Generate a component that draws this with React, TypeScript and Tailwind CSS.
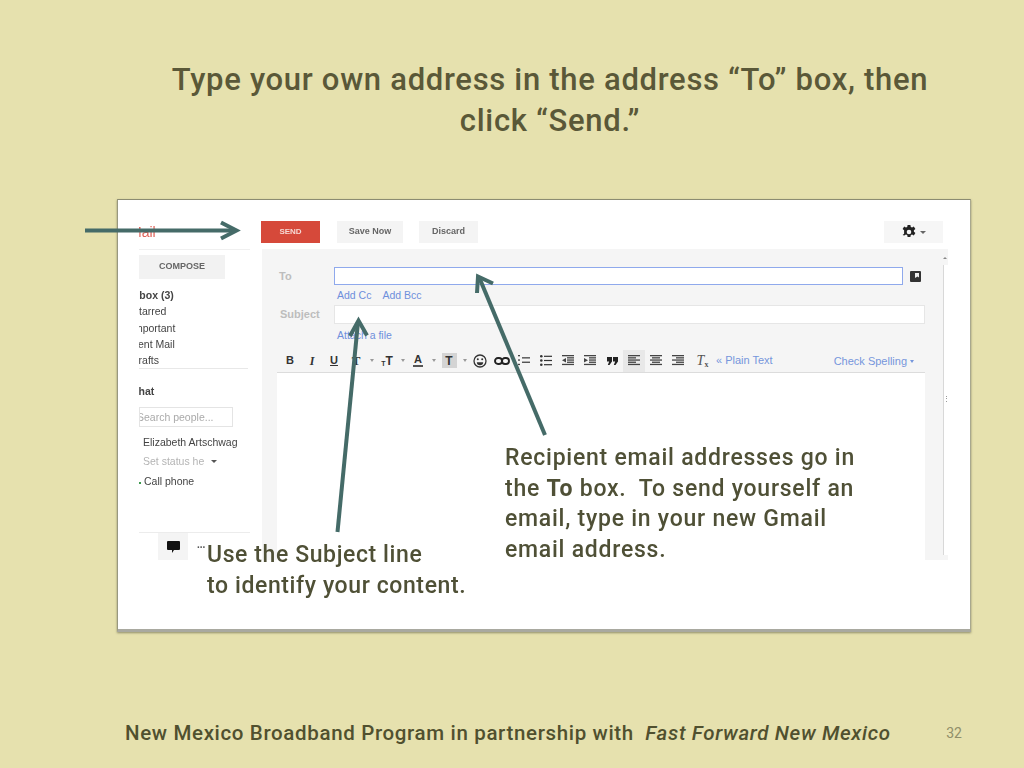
import React from 'react';

const Caret = () => (
  <span className="ml-auto mr-[2px] h-0 w-0 border-x-[2px] border-t-[3px] border-x-transparent border-t-[#999]" />
);

// one slot in the editor toolbar
const Tool = ({ children, caret, active }: { children: React.ReactNode; caret?: boolean; active?: boolean }) => (
  <div className={`flex h-[22px] items-center ${caret ? 'w-[31px]' : 'w-[22px]'}`}>
    <div className={`flex h-[22px] w-[22px] items-center justify-center ${active ? 'bg-[#e8e8e8]' : ''}`}>{children}</div>
    {caret && <Caret />}
  </div>
);

// Gmail's little bar icons: rows of [x, width]
const Bars = ({ rows, children }: { rows: number[][]; children?: React.ReactNode }) => (
  <svg width="12" height="11" viewBox="0 0 12 11" fill="#444">
    {rows.map((r, i) => (
      <rect key={i} x={r[0]} y={i * 2.2} width={r[1]} height="1.3" />
    ))}
    {children}
  </svg>
);

const Toolbar = () => (
  <div className="ml-[17px] flex h-[23px] items-center text-[#333]">
    <Tool><span className="text-[11px] font-bold">B</span></Tool>
    <Tool><span className="font-['Liberation_Serif'] text-[12px] font-bold italic">I</span></Tool>
    <Tool><span className="text-[11px] font-bold underline">U</span></Tool>
    <Tool caret><span className="font-['Liberation_Serif'] text-[13px] font-bold">T</span></Tool>
    <Tool caret>
      <span className="flex items-end font-bold leading-none">
        <span className="text-[7px]">T</span>
        <span className="text-[12px]">T</span>
      </span>
    </Tool>
    <Tool caret><span className="border-b-2 border-[#555] px-[1px] text-[11px] font-bold leading-[11px]">A</span></Tool>
    <Tool caret>
      <span className="flex h-[15px] w-[15px] items-center justify-center bg-[#d4d4d4] text-[12px] font-bold">T</span>
    </Tool>
    <Tool>
      <svg width="14" height="14" viewBox="0 0 14 14" fill="none" stroke="#333">
        <circle cx="7" cy="7" r="6" strokeWidth="1.3" />
        <circle cx="4.800" cy="5.300" r="1" fill="#333" stroke="none" />
        <circle cx="9.200" cy="5.300" r="1" fill="#333" stroke="none" />
        <path d="M3.800 8.200h6.400a3.200 3 0 0 1-6.400 0z" fill="#333" stroke="none" />
      </svg>
    </Tool>
    <Tool>
      <svg width="16" height="8" viewBox="0 0 16 8" fill="none" stroke="#222" strokeWidth="1.900">
        <rect x="1" y="1" width="7" height="6" rx="3" />
        <rect x="8" y="1" width="7" height="6" rx="3" />
      </svg>
    </Tool>
    <Tool>
      <Bars rows={[[0, 2], [4, 8], [0, 2], [4, 8], [0, 2]]} />
    </Tool>
    <Tool>
      <svg width="12" height="11" viewBox="0 0 12 11" fill="#333">
        <circle cx="1.300" cy="1.300" r="1.300" />
        <circle cx="1.300" cy="5.500" r="1.300" />
        <circle cx="1.300" cy="9.700" r="1.300" />
        <rect x="4" y=".7" width="8" height="1.200" />
        <rect x="4" y="4.900" width="8" height="1.200" />
        <rect x="4" y="9.100" width="8" height="1.200" />
      </svg>
    </Tool>
    <Tool>
      <Bars rows={[[0, 12], [5, 7], [5, 7], [5, 7], [0, 12]]}>
        <path d="M4 3L0 5.300 4 7.500z" />
      </Bars>
    </Tool>
    <Tool>
      <Bars rows={[[0, 12], [5, 7], [5, 7], [5, 7], [0, 12]]}>
        <path d="M0 3l4 2.300-4 2.200z" />
      </Bars>
    </Tool>
    <Tool>
      <svg width="11" height="8" viewBox="0 0 11 8" fill="#222">
        <path d="M0 0h5v4.500L2.500 8H.8l1.400-3.500H0zM6 0h5v4.500L8.500 8H6.800l1.400-3.500H6z" />
      </svg>
    </Tool>
    <Tool active><Bars rows={[[0, 12], [0, 8], [0, 12], [0, 8], [0, 12]]} /></Tool>
    <Tool><Bars rows={[[0, 12], [2, 8], [0, 12], [2, 8], [0, 12]]} /></Tool>
    <Tool><Bars rows={[[0, 12], [4, 8], [0, 12], [4, 8], [0, 12]]} /></Tool>
    <Tool>
      <span className="ml-[5px] font-['Liberation_Serif'] text-[14px] italic leading-none text-[#555]">
        T<sub className="text-[8px] font-bold not-italic">x</sub>
      </span>
    </Tool>
    <span className="ml-[5px] text-[11px] text-[#7596dc]">« Plain Text</span>
    <span className="ml-[61px] mt-[2px] text-[11px] text-[#7596dc]">Check Spelling</span>
    <span className="ml-[3px] mt-[2px] h-0 w-0 border-x-[2px] border-t-[3px] border-x-transparent border-t-[#7596dc]" />
  </div>
);

const GmailShot = () => (
  <div className="flex h-[360px] flex-col pl-[21px] pt-[21px] font-['Liberation_Sans',sans-serif] blur-[0.5px]">
    {/* top buttons */}
    <div className="flex h-[22px] items-center">
      <div className="w-[122px] overflow-hidden whitespace-nowrap text-[14px] leading-[20px] text-[#e0645a]">
        <span className="-ml-[9px] block">Mail</span>
      </div>
      <div className="flex h-[22px] w-[59px] items-center justify-center bg-[#d6493a] text-[8px] font-bold text-[#f6d8d3]">SEND</div>
      <div className="ml-[17px] flex h-[22px] w-[66px] items-center justify-center bg-[#f4f4f4] text-[9px] font-bold text-[#666]">Save Now</div>
      <div className="ml-[16px] flex h-[22px] w-[59px] items-center justify-center bg-[#f4f4f4] text-[9px] font-bold text-[#666]">Discard</div>
      <div className="ml-[406px] flex h-[22px] w-[59px] items-center justify-center gap-[4px] bg-[#f6f6f6]">
        <svg width="14" height="14" viewBox="0 0 14 14" className="text-[#222]">
          <path
            fill="currentColor"
            fillRule="evenodd"
            d="M5.6 0h2.8l.4 1.9 1.3.6 1.7-1 1.6 2.6-1.5 1.2v1.4l1.5 1.2-1.6 2.6-1.7-1-1.3.6-.4 1.9H5.6l-.4-1.9-1.3-.6-1.7 1L.6 9.900l1.5-1.2V5.300L.6 4.100l1.600-2.600 1.700 1 1.300-.6zM7 4.700a2.300 2.300 0 1 0 0 4.600 2.300 2.300 0 0 0 0-4.600z"
          />
        </svg>
        <span className="h-0 w-0 border-x-[3px] border-t-[3px] border-x-transparent border-t-[#666]" />
      </div>
    </div>

    <div className="mt-[6px] flex flex-1">
      {/* clipped left nav */}
      <div className="flex w-[123px] flex-col overflow-hidden">
        <div className="mr-[12px] h-[1px] bg-[#f0f0f0]" />
        <div className="mt-[5px] flex h-[24px] w-[86px] items-center justify-center bg-[#f2f2f2] text-[9px] font-bold text-[#666]">COMPOSE</div>
        <div className="mt-[8px] text-[10.5px] leading-[16.300px] text-[#444]">
          <div className="-ml-[9px] font-bold">Inbox (3)</div>
          <div className="-ml-[7px]">Starred</div>
          <div className="-ml-[8px] whitespace-nowrap">Important</div>
          <div className="-ml-[8px] whitespace-nowrap">Sent Mail</div>
          <div className="-ml-[8px]">Drafts</div>
        </div>
        <div className="mr-[14px] h-[1px] bg-[#e8e8e8]" />
        <div className="-ml-[8px] mt-[15px] text-[10.5px] font-bold leading-[14px] text-[#444]">Chat</div>
        <div className="mt-[9px] flex h-[20px] w-[94px] items-center overflow-hidden border border-[#e4e4e4] text-[10.5px] text-[#aaa]">
          <span className="-ml-[3px] whitespace-nowrap">Search people...</span>
        </div>
        <div className="ml-[4px] mt-[8px] w-[94px] overflow-hidden whitespace-nowrap text-[10.5px] leading-[14px] text-[#444]">Elizabeth Artschwager</div>
        <div className="ml-[4px] mt-[5px] flex items-center text-[10.5px] leading-[14px] text-[#b4b4b4]">
          Set status he
          <span className="ml-[7px] h-0 w-0 border-x-[3px] border-t-[3px] border-x-transparent border-t-[#555]" />
        </div>
        <div className="mt-[6px] flex items-center text-[10.5px] leading-[14px] text-[#444]">
          <span className="mr-[3px] mt-[4px] h-[2px] w-[2px] bg-[#3c9a4e]" />
          Call phone
        </div>
        <div className="mr-[12px] mt-[44px] h-[1px] bg-[#ececec]" />
        <div className="flex">
          <div className="ml-[19px] flex h-[27px] w-[30px] items-center justify-center bg-[#f4f4f4]">
            <svg width="13" height="12" viewBox="0 0 13 12"><path fill="#111" d="M1 0h11a1 1 0 0 1 1 1v7a1 1 0 0 1-1 1H7l-2 3V9H1a1 1 0 0 1-1-1V1a1 1 0 0 1 1-1z" /></svg>
          </div>
          <div className="ml-[9px] mt-[7px] text-[10px] font-bold leading-[10px] text-[#555]">...</div>
        </div>
      </div>

      {/* compose panel */}
      <div className="relative flex w-[686px] flex-col bg-[#f5f5f5] pt-[18px]">
        <div className="flex h-[18px] items-center">
          <span className="ml-[17px] w-[55px] text-[11px] font-bold text-[#bdbdbd]">To</span>
          <div className="h-[18px] w-[569px] border border-[#8fa9ec] bg-white" />
          <svg width="11" height="11" viewBox="0 0 11 11" className="ml-[7px]">
            <rect width="11" height="11" rx="1" fill="#333" />
            <path fill="#eee" d="M5 2h4v4.500L7.500 5.500 5 7z" />
          </svg>
        </div>
        <div className="ml-[75px] mt-[3px] flex gap-[11px] text-[10.5px] leading-[14px] text-[#6e8fdc]">
          <span>Add Cc</span>
          <span>Add Bcc</span>
        </div>
        <div className="mt-[3px] flex h-[19px] items-center">
          <span className="ml-[18px] w-[54px] text-[11px] font-bold text-[#bdbdbd]">Subject</span>
          <div className="h-[19px] w-[591px] border border-[#e6e6e6] bg-white" />
        </div>
        <div className="ml-[75px] mt-[4px] text-[10.5px] leading-[14px] text-[#6e8fdc]">Attach a file</div>
        <div className="mt-[7px]"><Toolbar /></div>
        <div className="ml-[15px] h-[188px] w-[648px] border-t border-[#dcdcdc] bg-white" />

        {/* scrollbar sliver */}
        <span className="absolute right-[1px] top-[8px] h-0 w-0 border-x-[2px] border-b-[2px] border-x-transparent border-b-[#888]" />
        <div className="absolute bottom-[5px] right-0 top-[16px] flex w-[5px] flex-col items-center border-l border-[#d8d8d8] bg-white">
          <div className="mt-[132px] text-[7px] leading-[4px] text-[#777]">⋮</div>
        </div>
      </div>
    </div>
  </div>
);

export default function App() {
  return (
    <div className="relative flex h-[768px] w-[1024px] flex-col overflow-hidden bg-[#e6e1ae] font-['Roboto',sans-serif] text-[#5a5838]">
      <h1 className="ml-[162px] w-[776px] pt-[59px] text-center text-[31px] font-medium leading-[41px] tracking-[0.7px]">
        Type your own address in the address “To” box, then click “Send.”
      </h1>

      <div className="ml-[117px] mt-[58px] h-[433px] w-[854px] border-b-[3px] border-l border-r border-t border-b-[#a9a9a0] border-l-[#98987f] border-r-[#a8a88e] border-t-[#8c8c72] bg-white shadow-[0_1px_2px_rgba(60,60,40,0.5)]">
        <GmailShot />
      </div>

      <div className="ml-[125px] mt-[87px] flex w-[837px] items-center justify-between">
        <div className="whitespace-pre text-[20.500px] font-medium leading-[28px] tracking-[0.65px] text-[#50502f]">
          New Mexico Broadband Program in partnership with  <em>Fast Forward New Mexico</em>
        </div>
        <span className="text-[14px] text-[#908f6a]">32</span>
      </div>

      {/* callouts sit on top of the screenshot */}
      <div className="absolute left-[505px] top-[443px] whitespace-pre text-[23px] font-medium leading-[30.700px] tracking-[0.75px] text-[#4f5036]">
        {'Recipient email addresses go in\nthe '}
        <b className="font-bold">To</b>
        {' box.  To send yourself an\nemail, type in your new Gmail\nemail address.'}
      </div>
      <div className="absolute left-[207px] top-[540px] whitespace-pre text-[23px] font-medium leading-[30.700px] tracking-[0.6px] text-[#4f5036]">
        {'Use the Subject line\nto identify your content.'}
      </div>

      {/* arrows */}
      <svg className="pointer-events-none absolute left-0 top-0" width="1024" height="768" fill="none" stroke="#456b68" strokeWidth="4">
        <path d="M85 230.500H236" />
        <path d="M221 222.500l15.500 8-15.500 8" />
        <path d="M337.500 532L358 322" />
        <path d="M350 336l8.500-15.500 8.500 15" />
        <path d="M545 435L479 277" />
        <path d="M477 293l1-16.500 15 7" />
      </svg>
    </div>
  );
}
